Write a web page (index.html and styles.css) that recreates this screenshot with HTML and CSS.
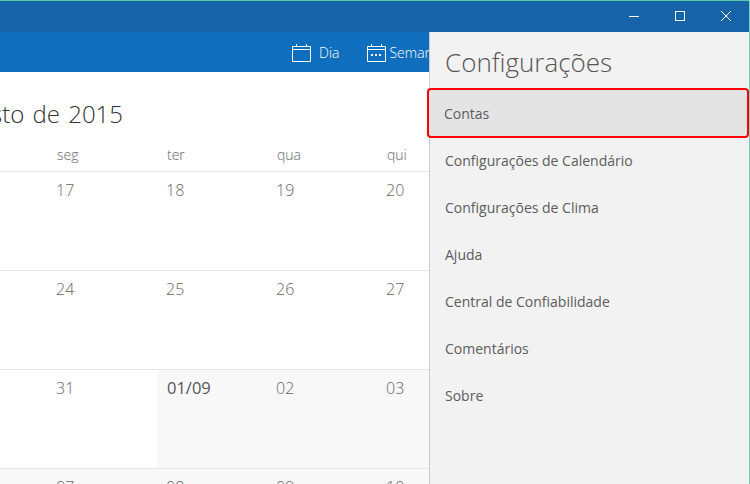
FILE: index.html
```html
<!DOCTYPE html>
<html lang="pt-BR">
<head>
<meta charset="utf-8">
<title>Calendário</title>
<link rel="stylesheet" href="styles.css">
</head>
<body>
<div class="window">
  <header class="titlebar">
    <button class="winbtn" aria-label="Minimizar"><svg width="12" height="12" viewBox="0 0 12 12"><path d="M1 6.5H11" class="wstroke"/></svg></button>
    <button class="winbtn" aria-label="Maximizar"><svg width="12" height="12" viewBox="0 0 12 12"><rect x="1.5" y="1.5" width="9" height="9" class="wstroke"/></svg></button>
    <button class="winbtn" aria-label="Fechar"><svg width="12" height="12" viewBox="0 0 12 12"><path d="M1 1L11 11M11 1L1 11" class="wstroke"/></svg></button>
  </header>
  <div class="content">
    <main class="main">
      <div class="toolbar">
        <span class="tool"><svg width="19" height="19" viewBox="0 0 19 19"><path d="M.5 3.5H18.5V18.5H.5ZM.5 6.5H18.5M4.5 1V3.5M14.5 1V3.5" class="wstroke"/></svg><span>Dia</span></span>
        <span class="tool"><svg width="19" height="19" viewBox="0 0 19 19"><path d="M.5 3.5H18.5V18.5H.5ZM.5 6.5H18.5M4.5 1V3.5M14.5 1V3.5" class="wstroke"/><path d="M4 11H6V13H4ZM8 11H10V13H8ZM12 11H14V13H12Z" class="wfill"/></svg><span>Semana</span></span>
      </div>
      <h1 class="month"><span>Agosto de 2015</span></h1>
      <div class="weekdays">
        <span>seg</span><span>ter</span><span>qua</span><span>qui</span>
      </div>
      <div class="week">
        <div class="day">17</div><div class="day">18</div><div class="day">19</div><div class="day">20</div>
      </div>
      <div class="week">
        <div class="day">24</div><div class="day">25</div><div class="day">26</div><div class="day">27</div>
      </div>
      <div class="week">
        <div class="day">31</div><div class="day other today">01/09</div><div class="day other">02</div><div class="day other">03</div>
      </div>
      <div class="week next">
        <div class="day">07</div><div class="day">08</div><div class="day">09</div><div class="day">10</div>
      </div>
    </main>
    <aside class="panel">
      <h2 class="panel-title">Configurações</h2>
      <ul class="menu">
        <li class="item selected">Contas</li>
        <li class="item">Configurações de Calendário</li>
        <li class="item">Configurações de Clima</li>
        <li class="item">Ajuda</li>
        <li class="item">Central de Confiabilidade</li>
        <li class="item">Comentários</li>
        <li class="item">Sobre</li>
      </ul>
    </aside>
  </div>
</div>
</body>
</html>
```
FILE: styles.css
```css
* { box-sizing: border-box; }
html, body { margin: 0; padding: 0; }
body {
  width: 750px;
  height: 484px;
  overflow: hidden;
  background: #fff;
  font-family: "Open Sans", "Noto Sans", sans-serif;
}
.window {
  display: flex;
  flex-direction: column;
  height: 484px;
  border-top: 1px solid #5ccba8;
  border-right: 1px solid #7fd0b8;
}
.titlebar {
  display: flex;
  justify-content: flex-end;
  height: 31px;
  flex: none;
  background: #1664a7;
}
.winbtn {
  width: 46px;
  height: 31px;
  padding: 9px 0 0;
  border: 0;
  background: none;
  display: flex;
  align-items: flex-start;
  justify-content: center;
}
.wstroke { fill: none; stroke: #fff; stroke-width: 1; }
.wfill { fill: #fff; }
.content { display: flex; flex: 1; min-height: 0; }
.main { width: 429px; flex: none; overflow: hidden; }
.toolbar {
  display: flex;
  height: 40px;
  background: #106ebe;
  padding-left: 292px;
  gap: 28px;
  color: #fff;
  font-size: 14px;
  font-weight: 300;
}
.tool {
  display: flex;
  align-items: center;
  gap: 8px;
  flex: none;
  white-space: nowrap;
}
.tool + .tool { gap: 3px; }
.month {
  display: flex;
  justify-content: flex-end;
  width: 123px;
  height: 68px;
  margin: 0;
  overflow: hidden;
  font-size: 24px;
  font-weight: 300;
  word-spacing: 2px;
  line-height: 83px;
  color: #333;
  white-space: nowrap;
}
.month span { flex: none; }
.weekdays, .week {
  display: grid;
  grid-template-columns: repeat(4, 110px);
  padding-left: 47px;
  width: 487px;
}
.weekdays {
  height: 32px;
  padding-bottom: 2px;
  align-items: center;
  border-bottom: 1px solid #e6e6e6;
  font-size: 14px;
  font-weight: 300;
  color: #666;
}
.weekdays span { padding-left: 10px; }
.week {
  height: 99px;
  border-bottom: 1px solid #e6e6e6;
}
.next { background: #f8f8f8; }
.day {
  padding: 5px 0 0 9px;
  font-size: 16px;
  font-weight: 300;
  line-height: 26px;
  color: #666;
}
.other { background: #f8f8f8; }
.today { padding-left: 10px; font-size: 16.5px; color: #555; font-weight: 400; }
.panel {
  flex: 1;
  background: #f2f2f2;
  border-left: 1px solid #ccc;
}
.panel-title {
  margin: 0;
  height: 58px;
  padding-left: 15px;
  font-size: 26px;
  font-weight: 300;
  line-height: 60px;
  color: #555;
}
.menu { list-style: none; margin: 0; padding: 0; }
.item {
  height: 47px;
  padding-left: 15px;
  font-size: 14px;
  line-height: 47px;
  color: #5c5c5c;
}
.selected {
  height: 46px;
  margin: 0 2px 1px -1px;
  line-height: 48px;
  background: #e4e4e4;
  outline: 2px solid #f00;
  border-radius: 2px;
}
```
